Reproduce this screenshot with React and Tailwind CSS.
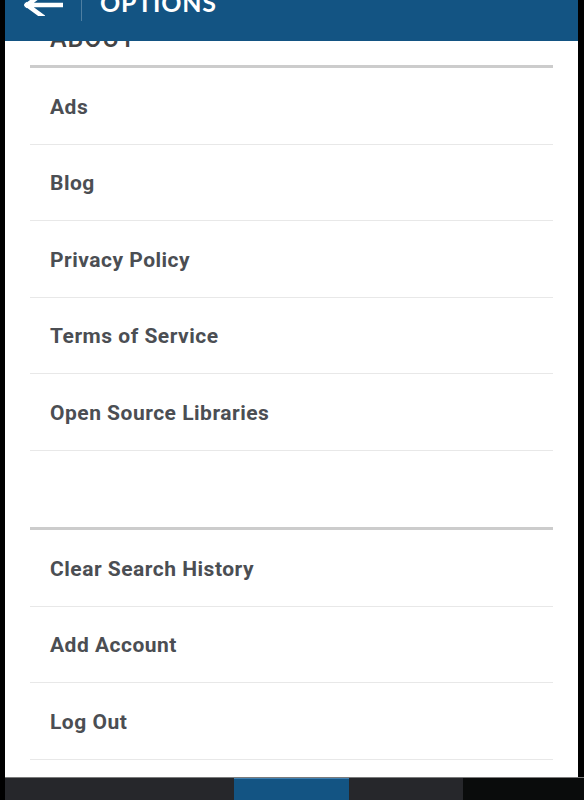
import React from 'react'

const about = ['Ads', 'Blog', 'Privacy Policy', 'Terms of Service', 'Open Source Libraries']
const account = ['Clear Search History', 'Add Account', 'Log Out']

function Row({ label }) {
    return (
        <div className="h-[76.5px] border-b border-[#e8e8e8] flex items-center pl-5 pt-[3px]">
            <span className="text-[21px] font-bold text-[#4b4e53] tracking-[0.5px]">{label}</span>
        </div>
    )
}

export default function App() {
    return (
        <div className="h-[800px] w-[584px] bg-black overflow-hidden flex flex-col font-['Roboto',sans-serif]">
            <div className="relative flex-1 ml-[5px] mr-[6px] bg-white overflow-hidden">
                {/* toolbar sits over the scrolled list */}
                <div className="absolute top-0 left-0 right-0 h-[41px] bg-[#135483] z-10 flex items-start">
                    <svg width="40" height="24" viewBox="0 -10 40 24" className="ml-[18px] mt-[-8px]">
                        <path d="M4 3 H38 M4 3 L19 14 M4 3 L19 -8" stroke="white" strokeWidth="4.5" fill="none" strokeLinecap="square" />
                    </svg>
                    <div className="ml-[18px] w-px h-[21px] bg-white/25" />
                    <span className="ml-[18px] mt-[-10px] text-[25px] leading-[25px] font-bold text-white font-['Lato',sans-serif] tracking-[0.8px]">OPTIONS</span>
                </div>

                <div className="px-[25px]">
                    <div className="h-[65px] pt-[26px] pl-5">
                        <span className="block text-[25px] leading-[25px] font-medium text-[#444] uppercase tracking-[1px]">About</span>
                    </div>
                    <div className="h-[3px] bg-[#cccccc]" />
                    {about.map((a) => <Row key={a} label={a} />)}
                    <div className="h-[76.5px]" />
                    <div className="h-[3px] bg-[#cccccc]" />
                    {account.map((a) => <Row key={a} label={a} />)}
                </div>
            </div>
            <div className="h-px bg-[#7a7a7a] ml-[5px]" />
            <div className="h-[22px] flex">
                <div className="w-[5px] bg-black" />
                <div className="w-[229px] bg-[#26272b]" />
                <div className="w-[115px] bg-[#135483] border-t border-[#3f7fb0]" />
                <div className="w-[114px] bg-[#26272b]" />
                <div className="flex-1 bg-[#0a0c0c]" />
            </div>
        </div>
    )
}
